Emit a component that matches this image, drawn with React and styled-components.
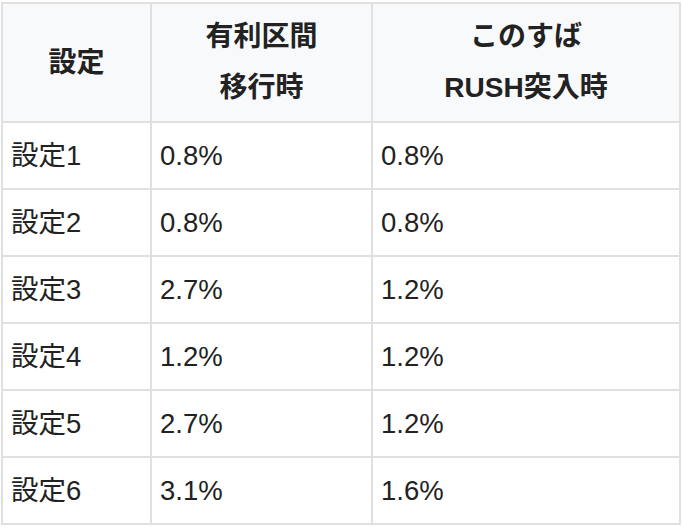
import React from "react";
import styled, { createGlobalStyle } from "styled-components";

const Global = createGlobalStyle`
  html, body { margin: 0; padding: 0; background: #ffffff; }
  body { font-family: "Liberation Sans", "Noto Sans CJK JP", sans-serif; color: #222222; }
`;

const Wrap = styled.div`
  padding: 2px 0 0 1px;
`;

const Table = styled.table`
  width: 678px;
  table-layout: fixed;
  border-collapse: collapse;
  border: 2px solid #e0e0e0;
`;

const Th = styled.th`
  background: #f8f9fb;
  border: 2px solid #e0e0e0;
  padding: 7px 8px 8px;
  font-size: 28px;
  line-height: 51px;
  font-weight: 700;
  text-align: center;
  color: #222222;
`;

const Td = styled.td`
  border: 2px solid #e0e0e0;
  padding: 12px 8px 12px 8px;
  font-size: 27.5px;
  line-height: 41px;
  font-weight: 400;
  text-align: left;
  color: #222222;
  background: #ffffff;
`;

const rows = [
  ["設定1", "0.8%", "0.8%"],
  ["設定2", "0.8%", "0.8%"],
  ["設定3", "2.7%", "1.2%"],
  ["設定4", "1.2%", "1.2%"],
  ["設定5", "2.7%", "1.2%"],
  ["設定6", "3.1%", "1.6%"],
];

export default function App() {
  return (
    <>
      <Global />
      <Wrap>
        <Table>
          <colgroup>
            <col style={{ width: 149 }} />
            <col style={{ width: 221 }} />
            <col style={{ width: 308 }} />
          </colgroup>
          <thead>
            <tr>
              <Th>設定</Th>
              <Th>
                有利区間
                <br />
                移行時
              </Th>
              <Th>
                このすば
                <br />
                RUSH突入時
              </Th>
            </tr>
          </thead>
          <tbody>
            {rows.map((r) => (
              <tr key={r[0]}>
                {r.map((c, i) => (
                  <Td key={i}>{c}</Td>
                ))}
              </tr>
            ))}
          </tbody>
        </Table>
      </Wrap>
    </>
  );
}
